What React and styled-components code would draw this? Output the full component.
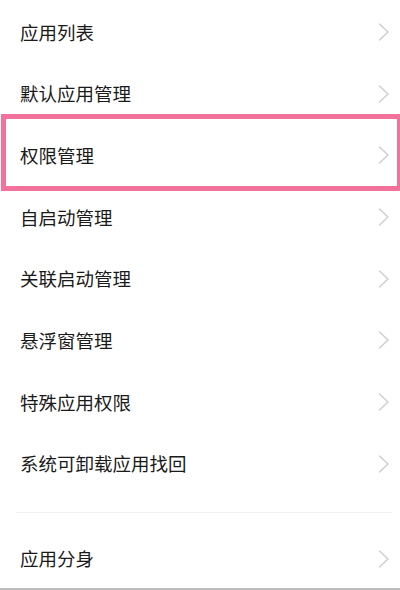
import React from "react";
import styled, { createGlobalStyle } from "styled-components";

const Global = createGlobalStyle`
  html, body { margin: 0; padding: 0; background: #fff; }
  body { width: 400px; height: 590px; overflow: hidden; }
`;

const Page = styled.div`
  position: relative;
  width: 400px;
  height: 590px;
  display: flex;
  flex-direction: column;
  background: #ffffff;
  font-family: "Noto Sans CJK SC", "Noto Sans", sans-serif;
  padding-top: 1px;
  box-sizing: border-box;
`;

const Row = styled.div`
  height: ${(p) => p.$h || 61.7}px;
  flex: none;
  display: flex;
  align-items: center;
  justify-content: space-between;
  padding: 0 10px 0 20px;
  box-sizing: border-box;
`;

const Label = styled.span`
  font-size: 18.5px;
  color: #1a1a1a;
  line-height: 1;
`;

const Divider = styled.div`
  flex: none;
  height: 1px;
  margin: 17px 8px 17px 16px;
  background: #f0f0f0;
`;

const BottomBar = styled.div`
  flex: none;
  height: 3px;
  background: #bdbdbd;
  margin-top: auto;
`;

const Highlight = styled.div`
  position: absolute;
  top: 114px;
  left: 1px;
  width: 401px;
  height: 77px;
  border: 5px solid #f2729c;
  box-sizing: border-box;
  pointer-events: none;
`;

const Chevron = () => (
  <svg width="12" height="20" viewBox="0 0 12 20" fill="none">
    <polyline
      points="1.5,2 10,10 1.5,18"
      stroke="#cfcfcf"
      strokeWidth="1.5"
      strokeLinecap="round"
      strokeLinejoin="round"
    />
  </svg>
);

const items = [
  "应用列表",
  "默认应用管理",
  "权限管理",
  "自启动管理",
  "关联启动管理",
  "悬浮窗管理",
  "特殊应用权限",
  "系统可卸载应用找回",
];

export default function App() {
  return (
    <>
      <Global />
      <Page>
        {items.map((t) => (
          <Row key={t}>
            <Label>{t}</Label>
            <Chevron />
          </Row>
        ))}
        <Divider />
        <Row $h={58}>
          <Label>应用分身</Label>
          <Chevron />
        </Row>
        <BottomBar />
        <Highlight />
      </Page>
    </>
  );
}
